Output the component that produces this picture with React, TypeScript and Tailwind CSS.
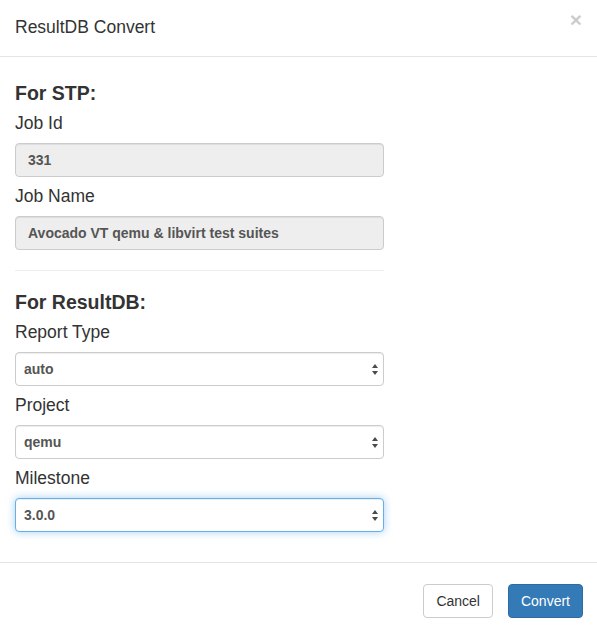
import React from "react";

const Arrows = () => (
  <svg width="6" height="11" viewBox="0 0 6 11" className="shrink-0">
    <path d="M0 4 L3 0 L6 4 Z" fill="#4a4a4a" />
    <path d="M0 7 L6 7 L3 11 Z" fill="#4a4a4a" />
  </svg>
);

const Label = ({ children }: { children: React.ReactNode }) => (
  <div className="h-[39px] flex items-center text-[17.5px] text-[#333]">{children}</div>
);

const ReadOnly = ({ value }: { value: string }) => (
  <div className="h-[34px] border border-[#ccc] rounded-[4px] bg-[#eee] px-[12px] flex items-center text-[14px] font-bold text-[#555] shadow-[inset_0_1px_1px_rgba(0,0,0,0.075)]">
    {value}
  </div>
);

const Select = ({ value, focused }: { value: string; focused?: boolean }) => (
  <div
    className={
      focused
        ? "h-[34px] border border-[#66afe9] rounded-[4px] bg-white pl-[8px] pr-[5px] flex items-center justify-between text-[14px] font-bold text-[#555] shadow-[inset_0_1px_1px_rgba(0,0,0,0.075),0_0_8px_rgba(102,175,233,0.6)]"
        : "h-[34px] border border-[#ccc] rounded-[4px] bg-white pl-[8px] pr-[5px] flex items-center justify-between text-[14px] font-bold text-[#555] shadow-[inset_0_1px_1px_rgba(0,0,0,0.075)]"
    }
  >
    <span>{value}</span>
    <Arrows />
  </div>
);

export default function App() {
  return (
    <div
      className="w-[597px] h-[632px] bg-white flex flex-col"
      style={{ fontFamily: '"Liberation Sans", Arial, Helvetica, sans-serif' }}
    >
      <div className="h-[57px] shrink-0 border-b border-[#e5e5e5] pl-[15px] pr-[15px] flex items-center justify-between">
        <div className="text-[17.5px] text-[#333] pb-[2px]">ResultDB Convert</div>
        <span className="self-start mt-[9px] text-[21px] font-bold leading-none text-black opacity-20">×</span>
      </div>
      <div className="pt-[25px] pb-[30px] px-[15px] border-b border-[#e5e5e5]">
        <div className="w-[369px] flex flex-col">
          <div className="text-[19.5px] font-bold text-[#333] leading-[22px]">For STP:</div>
          <Label>Job Id</Label>
          <ReadOnly value="331" />
          <Label>Job Name</Label>
          <ReadOnly value="Avocado VT qemu & libvirt test suites" />
          <div className="mt-[20px] h-px bg-[#eee]" />
          <div className="mt-[20px] text-[19.5px] font-bold text-[#333] leading-[22px]">For ResultDB:</div>
          <Label>Report Type</Label>
          <Select value="auto" />
          <Label>Project</Label>
          <Select value="qemu" />
          <Label>Milestone</Label>
          <Select value="3.0.0" focused />
        </div>
      </div>
      <div className="pt-[21px] pr-[14px] flex justify-end gap-[15px]">
        <button className="h-[34px] px-[12px] border border-[#ccc] rounded-[4px] bg-white text-[14px] text-[#333]">
          Cancel
        </button>
        <button className="h-[34px] px-[12px] border border-[#2e6da4] rounded-[4px] bg-[#337ab7] text-[14px] text-white">
          Convert
        </button>
      </div>
    </div>
  );
}
